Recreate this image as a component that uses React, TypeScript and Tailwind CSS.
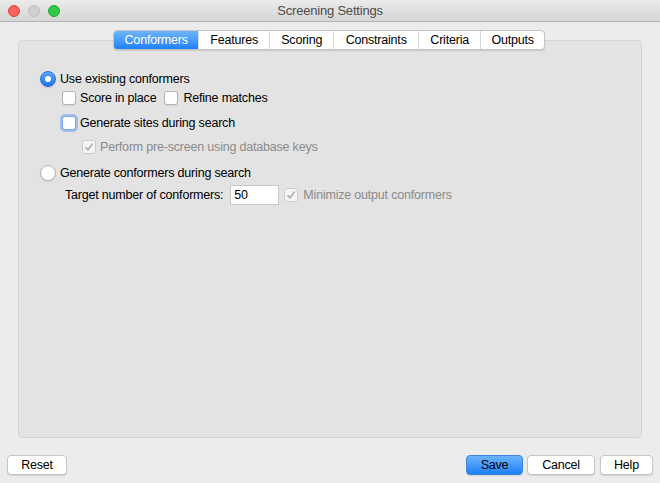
import React from "react";

const font = { fontFamily: '"Liberation Sans", Arial, sans-serif', letterSpacing: "-0.2px" };

function Radio({ checked }: { checked: boolean }) {
  return checked ? (
    <div className="w-[16px] h-[16px] rounded-full bg-gradient-to-b from-[#5aa8fd] to-[#1b73f0] border border-[#2a75e0] flex items-center justify-center shadow-[0_1px_1px_rgba(0,0,0,0.15)]">
      <div className="w-[6px] h-[6px] rounded-full bg-white" />
    </div>
  ) : (
    <div className="w-[16px] h-[16px] rounded-full bg-white border border-[#b3b3b3] shadow-[0_1px_1px_rgba(0,0,0,0.1)]" />
  );
}

function Check({ focus, disabledChecked }: { focus?: boolean; disabledChecked?: boolean }) {
  if (disabledChecked) {
    return (
      <div className="w-[14px] h-[14px] rounded-[3px] bg-[#f4f4f4] border border-[#cbcbcb] flex items-center justify-center">
        <svg width="10" height="10" viewBox="0 0 10 10">
          <path d="M1.5 5.2 L4 7.8 L8.6 1.6" fill="none" stroke="#a9a9a9" strokeWidth="1.5" />
        </svg>
      </div>
    );
  }
  return (
    <div
      className={
        "w-[14px] h-[14px] rounded-[3px] bg-white border " +
        (focus
          ? "border-[#7aa6e6] shadow-[0_0_0_2px_rgba(110,160,240,0.55)]"
          : "border-[#b5b5b5] shadow-[0_1px_1px_rgba(0,0,0,0.08)]")
      }
    />
  );
}

const tabs = [
  { label: "Conformers", w: 85 },
  { label: "Features", w: 71 },
  { label: "Scoring", w: 65 },
  { label: "Constraints", w: 85 },
  { label: "Criteria", w: 63 },
  { label: "Outputs", w: 64 },
];

function Btn({ children, primary, w }: { children: React.ReactNode; primary?: boolean; w: string }) {
  return (
    <div
      className={
        "h-[20px] rounded-[4px] flex items-center justify-center text-[12.5px] text-black border shadow-[0_1px_1px_rgba(0,0,0,0.12)] " +
        w +
        " " +
        (primary
          ? "bg-gradient-to-b from-[#6ab4fb] to-[#1a80f6] border-[#3d86e3]"
          : "bg-white border-[#c6c6c6]")
      }
    >
      {children}
    </div>
  );
}

export default function App() {
  return (
    <div style={font} className="w-[660px] h-[483px] bg-[#ececec] flex flex-col overflow-hidden text-[12.5px] text-black">
      {/* title bar */}
      <div className="h-[22px] relative flex items-center justify-center bg-gradient-to-b from-[#ebebeb] to-[#d6d6d6] border-b border-[#b4b4b4] shrink-0">
        <div className="absolute left-[8px] top-[5px] flex gap-[8px]">
          <div className="w-[12px] h-[12px] rounded-full bg-[#fc615d] border border-[#e0443e]" />
          <div className="w-[12px] h-[12px] rounded-full bg-[#d0d0d0] border border-[#c0c0c0]" />
          <div className="w-[12px] h-[12px] rounded-full bg-[#34c84a] border border-[#1aab29]" />
        </div>
        <span className="text-[13px] text-[#4d4d4d]">Screening Settings</span>
      </div>

      {/* tabs */}
      <div className="pt-[8px] flex justify-center relative z-10 pl-[113px] pr-[115px]">
        <div className="flex h-[20px] rounded-[4px] bg-white border border-[#c4c4c4] shadow-[0_1px_1px_rgba(0,0,0,0.12)] overflow-hidden">
          {tabs.map((t, i) => (
            <div
              key={t.label}
              style={{ width: t.w }}
              className={
                "flex items-center justify-center text-[12.5px] " +
                (i === 0
                  ? "bg-gradient-to-b from-[#6db5fb] to-[#1c80f7] text-white"
                  : "text-black border-l border-[#d9d9d9]")
              }
            >
              {t.label}
            </div>
          ))}
        </div>
      </div>

      {/* panel */}
      <div className="mx-[18px] -mt-[10px] h-[398px] rounded-[4px] bg-[#e3e3e3] border border-[#d5d5d5] pt-[29px] pl-[21px] flex flex-col">
        <div className="h-[18px] flex items-center gap-[4px]">
          <Radio checked />
          <span>Use existing conformers</span>
        </div>
        <div className="h-[18px] mt-[1px] flex items-center pl-[22px]">
          <Check />
          <span className="ml-[4px]">Score in place</span>
          <span className="ml-[8px]"><Check /></span>
          <span className="ml-[5px]">Refine matches</span>
        </div>
        <div className="h-[18px] mt-[7px] flex items-center pl-[22px]">
          <Check focus />
          <span className="ml-[4px]">Generate sites during search</span>
        </div>
        <div className="h-[18px] mt-[6px] flex items-center pl-[42px] text-[#8b8b8b]">
          <Check disabledChecked />
          <span className="ml-[4px]">Perform pre-screen using database keys</span>
        </div>
        <div className="h-[18px] mt-[8px] flex items-center gap-[4px]">
          <Radio checked={false} />
          <span>Generate conformers during search</span>
        </div>
        <div className="h-[20px] mt-[3px] flex items-center pl-[25px]">
          <span>Target number of conformers:</span>
          <div className="ml-[7px] w-[49px] h-[20px] bg-white border border-[#c8c8c8] flex items-center pl-[3px]">50</div>
          <span className="ml-[5px]"><Check disabledChecked /></span>
          <span className="ml-[5px] text-[#8b8b8b]">Minimize output conformers</span>
        </div>
      </div>

      {/* bottom buttons */}
      <div className="mt-[17px] px-[7px] flex items-center">
        <Btn w="w-[60px]">Reset</Btn>
        <div className="flex-1" />
        <Btn primary w="w-[57px]">Save</Btn>
        <div className="w-[4px]" />
        <Btn w="w-[68px]">Cancel</Btn>
        <div className="w-[5px]" />
        <Btn w="w-[53px]">Help</Btn>
      </div>
    </div>
  );
}
